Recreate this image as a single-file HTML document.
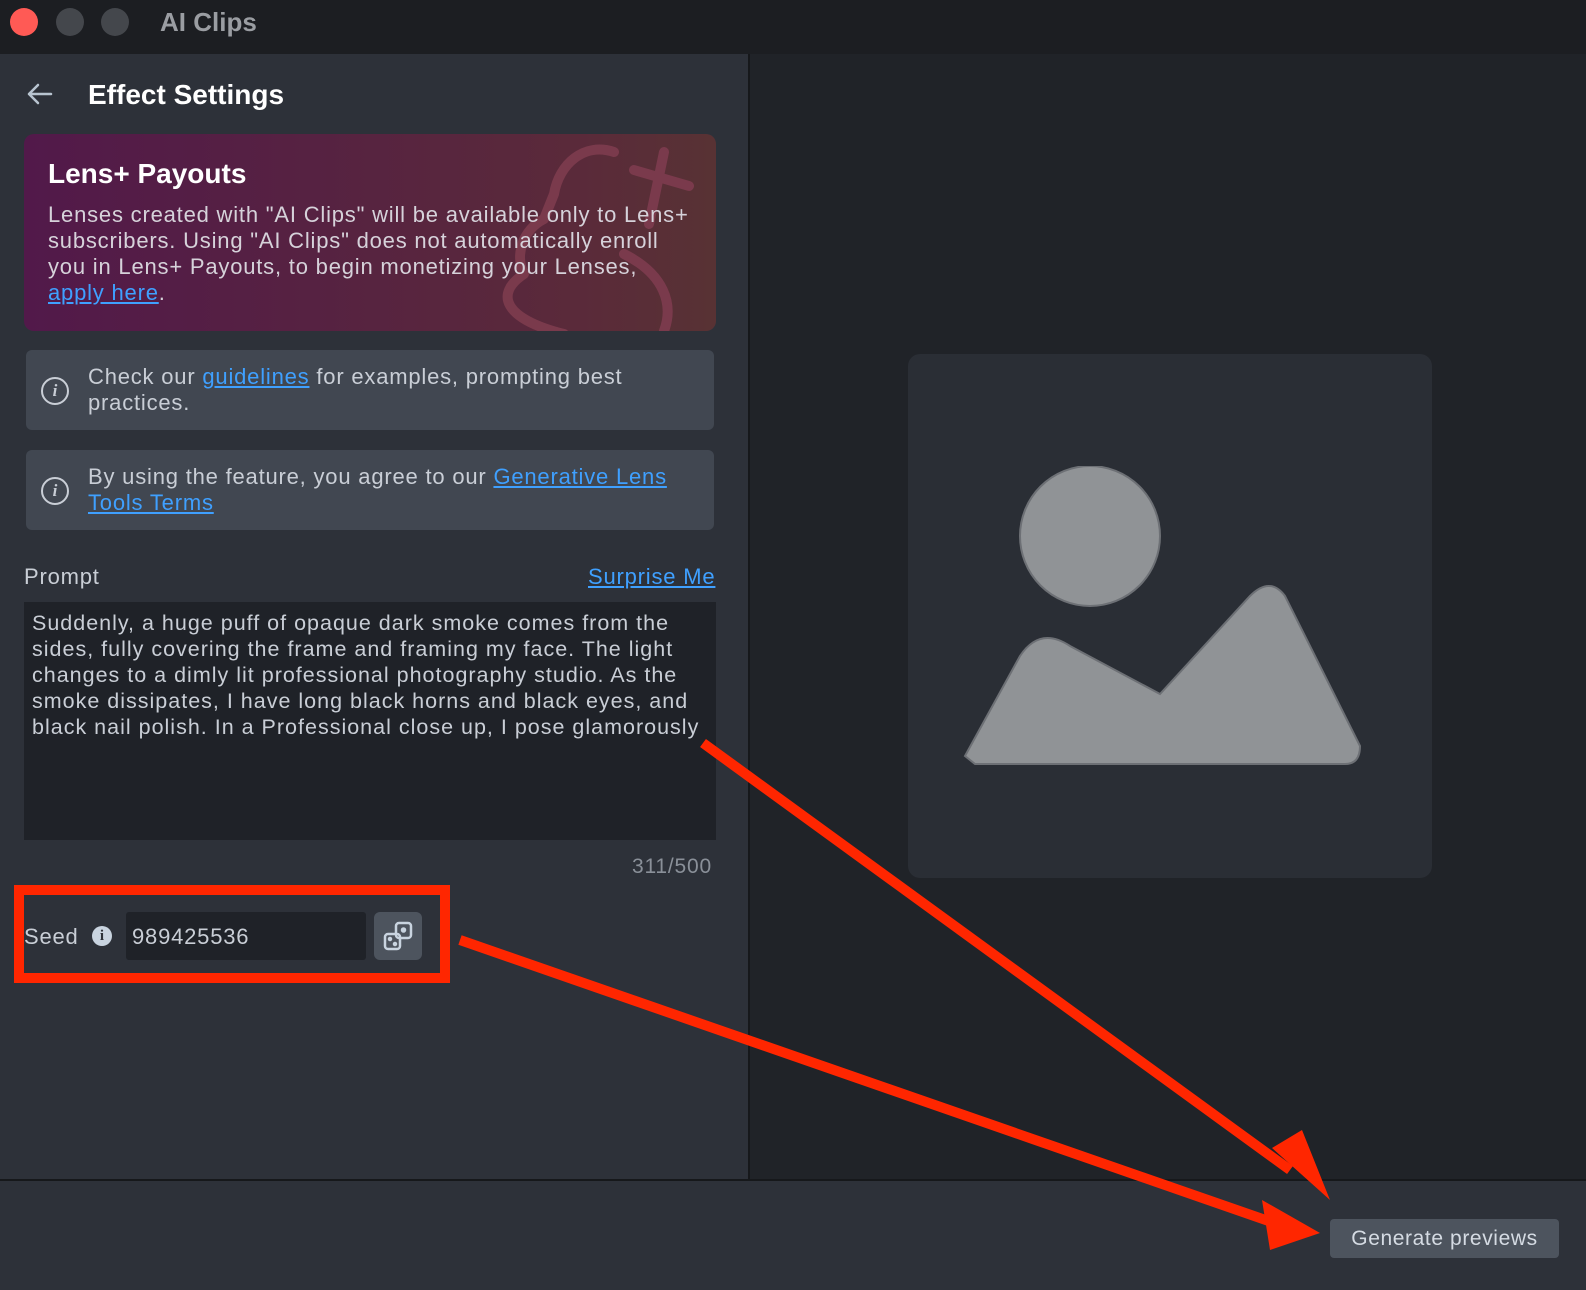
<!DOCTYPE html>
<html><head><meta charset="utf-8"><style>
*{margin:0;padding:0;box-sizing:border-box}
body{width:1586px;height:1290px;overflow:hidden;background:#202328;font-family:"Liberation Sans",sans-serif;position:relative;color:#c9ced6}
.abs{position:absolute}
a{color:#3fa0ff;text-decoration:underline}
.t{white-space:nowrap;letter-spacing:0.8px}
</style></head><body>
<div class="abs" style="left:0;top:0;width:1586px;height:54px;background:#1c1e22"></div>
<div class="abs" style="left:10px;top:8px;width:28px;height:28px;border-radius:50%;background:#ff5a55"></div>
<div class="abs" style="left:56px;top:8px;width:28px;height:28px;border-radius:50%;background:#44474c"></div>
<div class="abs" style="left:101px;top:8px;width:28px;height:28px;border-radius:50%;background:#44474c"></div>
<div class="abs" style="left:160px;top:7px;font-size:26px;font-weight:bold;color:#9a9da2">AI Clips</div>

<div class="abs" style="left:0;top:54px;width:750px;height:1126px;background:#2d3139;border-right:2px solid #16181b"></div>
<div class="abs" style="left:0;top:1179px;width:1586px;height:111px;background:#2d3139;border-top:2px solid #16181b"></div>

<svg class="abs" style="left:26px;top:82px" width="28" height="24" fill="none" stroke="#b8c4d0" stroke-width="2.5" stroke-linecap="round" stroke-linejoin="round"><path d="M25 12H3M12 3L3 12L12 21"/></svg>
<div class="abs" style="left:88px;top:79px;font-size:28px;font-weight:bold;color:#fff">Effect Settings</div>

<div class="abs" style="left:24px;top:134px;width:692px;height:197px;border-radius:10px;background:linear-gradient(90deg,#52194a,#5a2a3a 80%,#583234);overflow:hidden">
<svg class="abs" style="left:0;top:0" width="692" height="197"><g fill="none" stroke="#7a3a4c" stroke-width="10" stroke-linecap="round" stroke-linejoin="round"><path d="M590 18 C560 8 535 30 530 60 L520 85 C500 95 490 120 500 140 C470 160 480 185 540 200"/><path d="M640 18 L625 90 M610 36 L665 52"/><path d="M600 120 C640 140 650 170 640 197"/></g></svg>
<div class="abs" style="left:24px;top:24px;font-size:28px;font-weight:bold;color:#fff">Lens+ Payouts</div>
<div class="abs t" style="left:24px;top:68px;font-size:22px;line-height:26px;color:#d6d2da">Lenses created with "AI Clips" will be available only to Lens+<br>subscribers. Using "AI Clips" does not automatically enroll<br>you in Lens+ Payouts, to begin monetizing your Lenses,<br><a>apply here</a>.</div>
</div>

<div class="abs" style="left:26px;top:350px;width:688px;height:80px;border-radius:6px;background:#414751"></div>
<div class="abs" style="left:41px;top:377px;width:28px;height:28px;border:2px solid #c9ced6;border-radius:50%;text-align:center;font:italic bold 17px/24px 'Liberation Serif',serif">i</div>
<div class="abs t" style="left:88px;top:364px;font-size:22px;line-height:26px">Check our <a>guidelines</a> for examples, prompting best<br>practices.</div>

<div class="abs" style="left:26px;top:450px;width:688px;height:80px;border-radius:6px;background:#414751"></div>
<div class="abs" style="left:41px;top:477px;width:28px;height:28px;border:2px solid #c9ced6;border-radius:50%;text-align:center;font:italic bold 17px/24px 'Liberation Serif',serif">i</div>
<div class="abs t" style="left:88px;top:464px;font-size:22px;line-height:26px">By using the feature, you agree to our <a>Generative Lens</a><br><a>Tools Terms</a></div>

<div class="abs t" style="left:24px;top:564px;font-size:22px">Prompt</div>
<div class="abs t" style="left:588px;top:564px;font-size:22px"><a>Surprise Me</a></div>
<div class="abs" style="left:24px;top:602px;width:692px;height:238px;background:#1f2228"></div>
<div class="abs t" style="left:32px;top:610px;font-size:21.5px;line-height:26px;letter-spacing:1px">Suddenly, a huge puff of opaque dark smoke comes from the<br>sides, fully covering the frame and framing my face. The light<br>changes to a dimly lit professional photography studio. As the<br>smoke dissipates, I have long black horns and black eyes, and<br>black nail polish. In a Professional close up, I pose glamorously</div>
<div class="abs t" style="left:632px;top:855px;font-size:21px;color:#8a9099">311/500</div>

<div class="abs t" style="left:24px;top:924px;font-size:22px">Seed</div>
<div class="abs" style="left:92px;top:926px;width:20px;height:20px;border-radius:50%;background:#c9d4e0;color:#2d3139;text-align:center;font:bold 15px/20px 'Liberation Serif',serif">i</div>
<div class="abs t" style="left:126px;top:912px;width:240px;height:48px;border-radius:3px;background:#1f2228;font-size:22px;padding:12px 6px">989425536</div>
<div class="abs" style="left:374px;top:912px;width:48px;height:48px;border-radius:6px;background:#4d545e"></div>
<svg class="abs" style="left:382px;top:920px" width="32" height="32" fill="none" stroke="#c9d4e0" stroke-width="2.5"><rect x="14" y="3" width="15" height="15" rx="3"/><rect x="3" y="14" width="15" height="15" rx="3"/><circle cx="21.5" cy="10" r="1.5" fill="#c9d4e0"/><circle cx="8" cy="19" r="1" fill="#c9d4e0"/><circle cx="13" cy="24" r="1" fill="#c9d4e0"/></svg>
<div class="abs" style="left:14px;top:885px;width:436px;height:98px;border:10px solid #ff2600"></div>

<div class="abs" style="left:908px;top:354px;width:524px;height:524px;border-radius:12px;background:#2a2e35"></div>
<svg class="abs" style="left:960px;top:466px" width="410" height="300"><circle cx="130" cy="70" r="70" fill="#909396" stroke="#6d7075" stroke-width="2"/><path d="M5 290 L60 190 Q80 160 110 180 L200 228 L290 130 Q310 110 325 130 L400 280 Q400 298 385 298 L15 298 Z" fill="#909396" stroke="#6d7075" stroke-width="2"/></svg>

<div class="abs" style="left:1330px;top:1219px;width:229px;height:39px;border-radius:4px;background:#4d545e;color:#d5dbe3;font-size:21px;text-align:center;line-height:39px;letter-spacing:0.6px">Generate previews</div>

<svg class="abs" style="left:0;top:0" width="1586" height="1290"><g stroke="#ff2600" stroke-width="10" fill="#ff2600"><line x1="703" y1="743" x2="1290" y2="1170"/><line x1="460" y1="940" x2="1280" y2="1225"/></g><polygon points="1330,1200 1272,1148 1302,1130" fill="#ff2600"/><polygon points="1320,1233 1262,1200 1270,1250" fill="#ff2600"/></svg>
</body></html>
